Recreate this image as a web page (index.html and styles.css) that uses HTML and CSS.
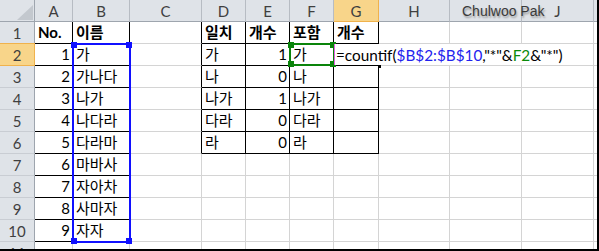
FILE: index.html
```html
<!DOCTYPE html>
<html lang="ko">
<head>
<meta charset="utf-8">
<title>countif</title>
<link rel="stylesheet" href="styles.css">
</head>
<body>
<div class="window">
  <div class="sheet">
    <!-- header row -->
    <div class="corner"><span class="tri"></span></div>
    <div class="ch">A</div><div class="ch">B</div><div class="ch">C</div><div class="ch">D</div>
    <div class="ch">E</div><div class="ch">F</div><div class="ch sel">G</div><div class="ch">H</div>
    <div class="ch"></div><div class="ch">J</div><div class="ch"></div>

    <!-- row 1 -->
    <div class="rh">1</div>
    <div class="c bk b">No.</div><div class="c bk b">이름</div><div class="c bkr"></div>
    <div class="c bk b">일치</div><div class="c bk b">개수</div><div class="c bk b">포함</div><div class="c bk b">개수</div>
    <div class="c"></div><div class="c"></div><div class="c"></div><div class="c"></div>

    <!-- row 2 -->
    <div class="rh sel">2</div>
    <div class="c bk num">1</div><div class="c bk">가</div><div class="c bkr"></div>
    <div class="c bk">가</div><div class="c bk num">1</div><div class="c bk">가</div><div class="c bk"></div>
    <div class="c"></div><div class="c"></div><div class="c"></div><div class="c"></div>

    <!-- row 3 -->
    <div class="rh">3</div>
    <div class="c bk num">2</div><div class="c bk">가나다</div><div class="c bkr"></div>
    <div class="c bk">나</div><div class="c bk num">0</div><div class="c bk">나</div><div class="c bk"></div>
    <div class="c"></div><div class="c"></div><div class="c"></div><div class="c"></div>

    <!-- row 4 -->
    <div class="rh">4</div>
    <div class="c bk num">3</div><div class="c bk">나가</div><div class="c bkr"></div>
    <div class="c bk">나가</div><div class="c bk num">1</div><div class="c bk">나가</div><div class="c bk"></div>
    <div class="c"></div><div class="c"></div><div class="c"></div><div class="c"></div>

    <!-- row 5 -->
    <div class="rh">5</div>
    <div class="c bk num">4</div><div class="c bk">나다라</div><div class="c bkr"></div>
    <div class="c bk">다라</div><div class="c bk num">0</div><div class="c bk">다라</div><div class="c bk"></div>
    <div class="c"></div><div class="c"></div><div class="c"></div><div class="c"></div>

    <!-- row 6 -->
    <div class="rh">6</div>
    <div class="c bk num">5</div><div class="c bk">다라마</div><div class="c bkr"></div>
    <div class="c bk">라</div><div class="c bk num">0</div><div class="c bk">라</div><div class="c bk"></div>
    <div class="c"></div><div class="c"></div><div class="c"></div><div class="c"></div>

    <!-- row 7 -->
    <div class="rh">7</div>
    <div class="c bk num">6</div><div class="c bk">마바사</div><div class="c"></div>
    <div class="c"></div><div class="c"></div><div class="c"></div><div class="c"></div>
    <div class="c"></div><div class="c"></div><div class="c"></div><div class="c"></div>

    <!-- row 8 -->
    <div class="rh">8</div>
    <div class="c bk num">7</div><div class="c bk">자아차</div><div class="c"></div>
    <div class="c"></div><div class="c"></div><div class="c"></div><div class="c"></div>
    <div class="c"></div><div class="c"></div><div class="c"></div><div class="c"></div>

    <!-- row 9 -->
    <div class="rh">9</div>
    <div class="c bk num">8</div><div class="c bk">사마자</div><div class="c"></div>
    <div class="c"></div><div class="c"></div><div class="c"></div><div class="c"></div>
    <div class="c"></div><div class="c"></div><div class="c"></div><div class="c"></div>

    <!-- row 10 -->
    <div class="rh">10</div>
    <div class="c bk num">9</div><div class="c bk">자자</div><div class="c"></div>
    <div class="c"></div><div class="c"></div><div class="c"></div><div class="c"></div>
    <div class="c"></div><div class="c"></div><div class="c"></div><div class="c"></div>

    <!-- row 11 -->
    <div class="rh">11</div>
    <div class="c"></div><div class="c"></div><div class="c"></div>
    <div class="c"></div><div class="c"></div><div class="c"></div><div class="c"></div>
    <div class="c"></div><div class="c"></div><div class="c"></div><div class="c"></div>

    <!-- overlays -->
    <div class="range range-b">
      <span class="h tl"></span><span class="h tr"></span><span class="h bl"></span><span class="h br"></span>
    </div>
    <div class="range range-f">
      <span class="h tl"></span><span class="h tr"></span><span class="h bl"></span><span class="h br"></span>
    </div>
    <div class="caret"></div>
    <div class="editor">=countif(<span class="ref-b">$B$2:$B$10</span>,"*"&amp;<span class="ref-f">F2</span>&amp;"*")</div>
    <div class="fill"></div>
    <div class="author">Chulwoo Pak</div>
  </div>
</div>
</body>
</html>
```

FILE: styles.css
```css
* { box-sizing: border-box; }

html, body {
  margin: 0;
  padding: 0;
  background: #fff;
}

.window {
  width: 599px;
  height: 251px;
  border-right: 2px solid #000;
  border-bottom: 2px solid #000;
  overflow: hidden;
  background: #fff;
}

.sheet {
  position: relative;
  display: grid;
  grid-template-columns: 35px 38px 57px 72px 44px 44px 44px 45px 71px 72px 72px 12px;
  grid-template-rows: repeat(12, 22px);
  font-family: "Lato", "Noto Sans CJK KR", sans-serif;
  font-size: 15px;
  color: #000;
}

.corner {
  position: relative;
  background: #dfe3e8;
  border-right: 1px solid #9ea5ae;
  border-bottom: 1px solid #9ea5ae;
}
.tri {
  position: absolute;
  left: 17px;
  top: 5px;
  width: 16px;
  height: 15px;
  background: #c3c8ce;
  clip-path: polygon(100% 0, 100% 100%, 0 100%);
}

.ch {
  background: #dfe3e8;
  border-right: 1px solid #b7bcc3;
  border-bottom: 1px solid #9ea5ae;
  color: #3f3f3f;
  display: flex;
  align-items: center;
  justify-content: center;
  padding-top: 1px;
}

.rh {
  background: #dfe3e8;
  border-right: 1px solid #9ea5ae;
  border-bottom: 1px solid #c9cdd3;
  color: #3f3f3f;
  display: flex;
  align-items: center;
  justify-content: center;
  padding-top: 1px;
}

.sel {
  background: #f8d58a;
  border-color: #f0b24c;
}
.rh.sel { border-top: 1px solid #f0b24c; margin-top: -1px; }

.c {
  border-right: 1px solid #d4d4d4;
  border-bottom: 1px solid #d4d4d4;
  display: flex;
  align-items: flex-end;
  padding: 0 2px 2px 3px;
  white-space: nowrap;
  line-height: 18px;
}

.bk { border-right-color: #000; border-bottom-color: #000; }
.bkr { border-right-color: #000; }

.b { font-weight: 700; }
.num { justify-content: flex-end; }

.range {
  position: absolute;
  border: 2px solid #1010ff;
}
.range-b {
  left: 72px;
  top: 43px;
  width: 59px;
  height: 200px;
}
.range-f {
  left: 289px;
  top: 43px;
  width: 46px;
  height: 23px;
  border-color: #0a840a;
}
.h {
  position: absolute;
  width: 6px;
  height: 6px;
  background: #1010ff;
}
.range-f .h { background: #0a840a; }
.tl { left: -3px; top: -3px; }
.tr { right: -3px; top: -3px; }
.bl { left: -3px; bottom: -3px; }
.br { right: -3px; bottom: -3px; }

.caret {
  position: absolute;
  left: 334px;
  top: 44px;
  width: 1px;
  height: 21px;
  background: #e25ce2;
}

.editor {
  position: absolute;
  left: 335px;
  top: 44px;
  height: 21px;
  width: 240px;
  background: #fff;
  padding: 0 0 0 1px;
  font-size: 15.3px;
  line-height: 22px;
  white-space: nowrap;
}
.ref-b { color: #2222ee; }
.ref-f { color: #0a8a0a; }

.fill {
  position: absolute;
  left: 378px;
  top: 65px;
  width: 3px;
  height: 3px;
  background: #000;
}

.author {
  position: absolute;
  left: 462px;
  top: 3px;
  font-family: "Liberation Sans", sans-serif;
  font-size: 14px;
  color: #3a3a3a;
  text-shadow: 1px 2px 2px #9a9a9a;
}
```
